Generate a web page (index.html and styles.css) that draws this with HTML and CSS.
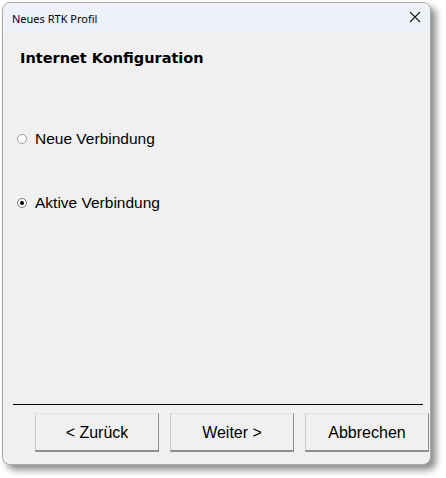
FILE: index.html
```
<!DOCTYPE html>
<html lang="de">
<head>
<meta charset="utf-8">
<title>Neues RTK Profil</title>
<link rel="stylesheet" href="styles.css">
</head>
<body>
<div class="window">
  <div class="titlebar">
    <span class="title">Neues RTK Profil</span>
    <svg class="close" width="12" height="12" viewBox="0 0 12 12"><path d="M1 1L11 11M11 1L1 11" stroke="#1a1a1a" stroke-width="1.1" fill="none"/></svg>
  </div>
  <div class="content">
    <h1 class="heading">Internet Konfiguration</h1>
    <div class="options">
      <label class="option"><span class="radio"></span><span class="label">Neue Verbindung</span></label>
      <label class="option"><span class="radio checked"></span><span class="label">Aktive Verbindung</span></label>
    </div>
    <div class="separator"></div>
    <div class="buttons">
      <button class="btn">&lt; Zurück</button>
      <button class="btn">Weiter &gt;</button>
      <button class="btn">Abbrechen</button>
    </div>
  </div>
</div>
</body>
</html>
```
FILE: styles.css
```
html, body {
  margin: 0;
  padding: 0;
  background: #ffffff;
}
body {
  width: 446px;
  height: 478px;
  overflow: hidden;
}
.window {
  margin: 2px 0 0 2px;
  width: 427px;
  height: 461px;
  border: 1px solid #a9a9a9;
  border-radius: 8px;
  background: #f0f0f0;
  box-shadow: 5px 5px 7px rgba(0, 0, 0, 0.45);
  display: flex;
  flex-direction: column;
  overflow: hidden;
}
.titlebar {
  height: 31px;
  flex: none;
  background: #eef2f8;
  display: flex;
  align-items: center;
  justify-content: space-between;
  padding: 0 9px 0 9px;
}
.title {
  font-family: "Noto Sans", sans-serif;
  font-size: 11px;
  color: #000;
  margin-top: -1px;
}
.close {
  display: block;
  margin-top: -3px;
}
.content {
  flex: 1;
  display: flex;
  flex-direction: column;
}
.heading {
  margin: 15px 0 0 17px;
  font-family: "DejaVu Sans", Verdana, sans-serif;
  font-weight: bold;
  font-size: 14.5px;
  line-height: 18px;
  color: #000;
}
.options {
  display: flex;
  flex-direction: column;
  gap: 46px;
  margin-top: 63px;
  padding-left: 14px;
}
.option {
  display: flex;
  align-items: center;
  height: 18px;
  font-family: "Liberation Sans", Arial, sans-serif;
  font-size: 15.5px;
  color: #000;
}
.radio {
  width: 8px;
  height: 8px;
  border: 1px solid #9a9a9a;
  border-radius: 50%;
  background: #ffffff;
  margin-right: 8px;
  position: relative;
  flex: none;
}
.radio.checked {
  border-color: #7a7a7a;
}
.radio.checked::after {
  content: "";
  position: absolute;
  left: 2px;
  top: 2px;
  width: 4px;
  height: 4px;
  border-radius: 50%;
  background: #000;
}
.separator {
  margin-top: auto;
  margin-left: 10px;
  margin-right: 7px;
  height: 1px;
  background: #000;
}
.buttons {
  display: flex;
  gap: 11px;
  margin: 8px 0 12px 32px;
}
.btn {
  width: 124px;
  height: 39px;
  box-sizing: border-box;
  background: #f0f0f0;
  border-top: 1px solid #e3e3e3;
  border-left: 1px solid #c8c8c8;
  border-right: 1px solid #8f8f8f;
  border-bottom: 2px solid #8f8f8f;
  font-family: "Liberation Sans", Arial, sans-serif;
  font-size: 16px;
  color: #000;
  padding: 2px 0 0 0;
}
```
